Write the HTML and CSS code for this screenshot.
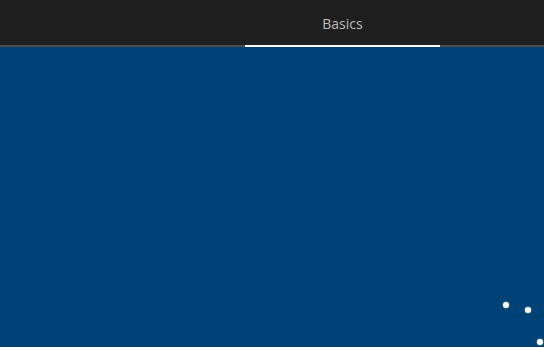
FILE: index.html
```html
<!DOCTYPE html>
<html lang="en">

<head>
    <meta charset="UTF-8">
    <meta name="viewport" content="width=device-width, initial-scale=1.0">
    <title>Basics</title>

    <link rel="stylesheet" href="styles.css">
</head>

<body>

    <div class="app">
        <nav class="tabs">
            <div class="tabs__item tabs__item--active">Basics</div>
        </nav>
        <main class="stage">
            <span class="dot dot--a"></span>
            <span class="dot dot--b"></span>
            <span class="dot dot--c"></span>
        </main>
    </div>

</body>

</html>
```

FILE: styles.css
```css
* {
    box-sizing: border-box;
}

body {
    margin: 0;
    font-family: "Open Sans", "Noto Sans", sans-serif;
}

.app {
    display: flex;
    flex-direction: column;
    height: 347px;
    overflow: hidden;
}

.tabs {
    display: flex;
    height: 47px;
    padding-left: 245px;
    background: #1f1f1f;
    border-bottom: 2px solid #4b4b4b;
}

.tabs__item {
    width: 195px;
    margin-bottom: -2px;
    padding-top: 14px;
    text-align: center;
    color: #bcbcbc;
    font-size: 14px;
}

.tabs__item--active {
    border-bottom: 2px solid #ffffff;
}

.stage {
    position: relative;
    flex: 1;
    background: #004275;
}

.dot {
    position: absolute;
    width: 6px;
    height: 6px;
    border-radius: 50%;
    background: #ffffff;
    box-shadow: 0 0 2px rgba(255, 255, 255, 0.6);
}

.dot--a {
    left: 503px;
    top: 255px;
}

.dot--b {
    left: 525px;
    top: 260px;
}

.dot--c {
    left: 537px;
    top: 292px;
}
```
